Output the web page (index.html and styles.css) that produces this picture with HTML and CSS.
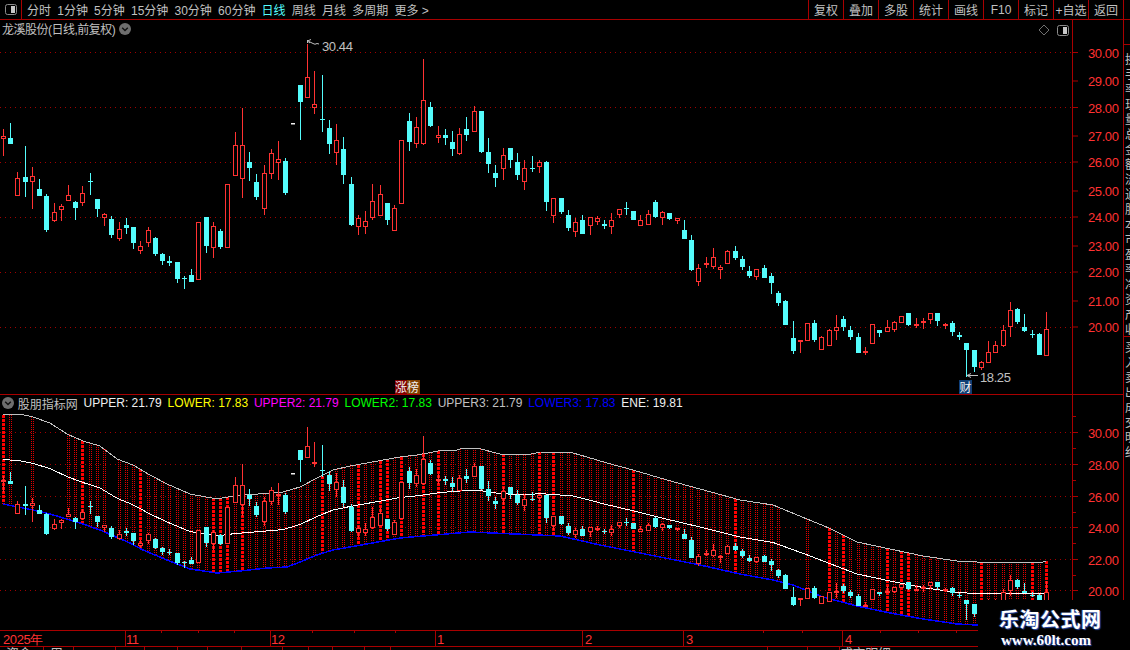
FILE: index.html
```html
<!DOCTYPE html>
<html>
<head>
  <meta charset="utf-8">
  <link rel="stylesheet" href="styles.css">
</head>
<body>
  <div class="toolbar">
    <div class="panel-btn">
      <svg width="12" height="11" viewBox="0 0 12 11"><rect x="0.5" y="0.5" width="11" height="10" rx="2" fill="none" stroke="#8c8c8c"/><rect x="6" y="2" width="4" height="7" fill="#c8c8c8"/></svg>
    </div>
    <div class="periods">
      <span>分时</span><span>1分钟</span><span>5分钟</span><span>15分钟</span><span>30分钟</span><span>60分钟</span>
      <span class="active">日线</span><span>周线</span><span>月线</span><span>多周期</span><span>更多 &gt;</span>
    </div>
    <div class="actions">
      <span>复权</span><span>叠加</span><span>多股</span><span>统计</span><span>画线</span><span>F10</span><span>标记</span><span>+自选</span><span>返回</span>
    </div>
  </div>

  <div class="workspace">
    <div class="charts">
      <div class="pane pane-price">
        <svg id="price-chart" class="chart" viewBox="0 20 1123 374"></svg>
        <div class="pane-title">
          <span>龙溪股份(日线,前复权)</span>
          <svg class="chevron" width="12" height="12" viewBox="0 0 12 12"><circle cx="6" cy="6" r="6" fill="#6e6e6e"/><path d="M3.2 4.8 6 7.6 8.8 4.8" fill="none" stroke="#111" stroke-width="1.4"/></svg>
        </div>
        <div class="pane-tools">
          <svg width="12" height="12" viewBox="0 0 12 12"><path d="M6 1 11 6 6 11 1 6Z" fill="none" stroke="#707070"/></svg>
          <svg width="12" height="11" viewBox="0 0 12 11"><rect x="0.5" y="0.5" width="11" height="10" rx="2" fill="none" stroke="#8c8c8c"/><rect x="6" y="2" width="4" height="7" fill="#c8c8c8"/></svg>
        </div>
      </div>

      <div class="pane pane-indicator">
        <svg id="band-chart" class="chart" viewBox="0 395 1123 235"></svg>
        <div class="legend">
          <svg class="chevron" width="12" height="12" viewBox="0 0 12 12"><circle cx="6" cy="6" r="6" fill="#6e6e6e"/><path d="M3.2 4.8 6 7.6 8.8 4.8" fill="none" stroke="#111" stroke-width="1.4"/></svg>
          <span class="legend-name">股朋指标网</span>
          <span class="c-white">UPPER: 21.79</span>
          <span class="c-yellow">LOWER: 17.83</span>
          <span class="c-magenta">UPPER2: 21.79</span>
          <span class="c-green">LOWER2: 17.83</span>
          <span class="c-gray">UPPER3: 21.79</span>
          <span class="c-blue">LOWER3: 17.83</span>
          <span class="c-white">ENE: 19.81</span>
        </div>
      </div>

      <svg id="date-axis" class="date-axis" viewBox="0 630 1123 20"></svg>
    </div>

    <div class="side">
      <div class="side-top"></div>
      <div class="side-block side-quotes">换手率现量总金额流通股本市盈率净资产收</div>
      <div class="side-block side-trades">买入卖出成交明细</div>
    </div>
  </div>

  <div class="watermark">
    <div class="wm-title">乐淘公式网</div>
    <div class="wm-url">www.60lt.com</div>
  </div>

  <script src="charts.js"></script>
</body>
</html>
```
FILE: styles.css
```css
* {
  box-sizing: border-box;
}

html, body {
  margin: 0;
  background-color: #000;
  overflow: hidden;
}

body {
  position: relative;
  width: 1130px;
  height: 650px;
  font-family: "Liberation Sans", "Noto Sans CJK SC", sans-serif;
  font-size: 12px;
  color: #c0c0c0;
}

/* toolbar */
.toolbar {
  display: flex;
  height: 20px;
  padding-right: 6px;
  border-bottom: 1px solid #a80000;
}

.panel-btn {
  display: flex;
  align-items: center;
  justify-content: center;
  width: 22px;
  border-right: 1px solid #a80000;
}

.periods {
  display: flex;
  align-items: center;
  gap: 6.2px;
  padding-left: 5px;
  flex: 1;
  white-space: nowrap;
}

.periods .active {
  color: #54fcfc;
}

.actions {
  display: flex;
  border-right: 1px solid #a80000;
}

.actions span {
  display: flex;
  align-items: center;
  justify-content: center;
  width: 35px;
  border-left: 1px solid #a80000;
  white-space: nowrap;
}

/* chart area */
.workspace {
  display: flex;
  height: 630px;
}

.charts {
  width: 1124px;
  border-right: 1px solid #a80000;
}

.pane {
  position: relative;
}

.pane-price {
  height: 375px;
  border-bottom: 1px solid #a80000;
}

.pane-indicator {
  height: 235px;
}

.chart {
  display: block;
  width: 1123px;
  height: 100%;
}

.chart text,
.date-axis text {
  font-family: "Liberation Sans", sans-serif;
  font-size: 13px;
  letter-spacing: -0.4px;
  fill: #ff3232;
}

.chart .mark {
  fill: #c0c0c0;
}

.chart .tag {
  font-family: "Noto Sans CJK SC", sans-serif;
  font-size: 12px;
  letter-spacing: 0;
  fill: #f0f0f0;
}

.crisp {
  shape-rendering: crispEdges;
}

.pane-title {
  position: absolute;
  top: 0;
  left: 2px;
  display: flex;
  align-items: center;
  gap: 4px;
  letter-spacing: -0.5px;
}

.chevron {
  flex: none;
}

.pane-tools {
  position: absolute;
  top: 4px;
  left: 1038px;
  display: flex;
  align-items: center;
  gap: 7px;
}

.legend {
  position: absolute;
  top: 0;
  left: 2px;
  display: flex;
  align-items: center;
  gap: 5.8px;
  height: 16px;
  font-size: 12px;
  white-space: nowrap;
}

.legend-name {
  margin-left: -2px;
}

.c-white { color: #f0f0f0; }
.c-yellow { color: #ffff00; }
.c-magenta { color: #ff00ff; }
.c-green { color: #00ff00; }
.c-gray { color: #c0c0c0; }
.c-blue { color: #0000ff; }

.date-axis {
  display: block;
  width: 1123px;
  height: 20px;
}

/* clipped right column */
.side {
  width: 6px;
  overflow: hidden;
  font-size: 12px;
  line-height: 15px;
}

.side-top {
  height: 25px;
  border-bottom: 1px solid #a80000;
}

.side-block {
  width: 14px;
  padding-left: 1px;
  overflow: hidden;
}

.side-quotes {
  height: 292px;
  padding-top: 8px;
  border-bottom: 1px solid #a80000;
}

.side-trades {
  height: 122px;
  padding-top: 4px;
}

.watermark {
  position: absolute;
  left: 978px;
  top: 600px;
  width: 152px;
  height: 50px;
  padding: 6px 0 0 21px;
  background-color: #000;
  color: #fff;
}

.wm-title {
  font-family: "Noto Sans CJK SC", sans-serif;
  font-size: 20px;
  font-weight: 700;
  line-height: 26px;
  letter-spacing: 0.5px;
  text-shadow: 1px 1px 1px #2a4aa8, -1px 0 1px #2a4aa8;
}

.wm-url {
  font-family: "Liberation Serif", serif;
  font-size: 15px;
  font-weight: 700;
  line-height: 16px;
  margin-left: 2px;
  text-shadow: 1px 1px 1px #2a4aa8;
}
```
FILE: charts.js
```js
// each candle: [red?, high, body top, body bottom, low], in pixels of the price pane
const candles = [
  [1,129,136,139,156],[0,123,138,144,144],[1,172,178,196,196],[0,146,177,182,197],[1,167,176,182,209],
  [0,179,189,196,196],[0,194,196,230,232],[1,203,212,221,222],[1,204,206,210,221],[1,185,195,201,201],
  [0,201,202,208,220],[1,186,193,203,206],[0,173,181,182,195],[0,199,199,209,217],[1,213,214,218,226],
  [0,216,219,235,238],[1,222,229,239,241],[0,218,225,228,234],[0,227,227,243,249],[1,241,246,251,254],
  [1,227,230,243,247],[0,237,238,254,256],[0,253,254,261,265],[0,256,261,263,266],[0,262,262,279,283],
  [0,276,278,279,289],[0,269,275,282,282],[1,222,222,280,280],[0,217,217,246,253],[1,222,226,248,258],
  [0,229,231,247,249],[1,184,184,248,248],[1,132,145,176,176],[1,108,145,179,198],[0,152,162,168,181],
  [0,174,182,197,200],[1,165,173,209,215],[1,149,153,174,179],[1,141,159,163,180],[0,158,161,193,195],
  null,
  [0,85,85,102,140],[1,44,77,98,98],[1,71,104,108,114],[0,75,119,120,132],[0,120,128,144,154],
  [1,124,140,153,165],[0,137,149,175,184],[0,177,184,225,226],[1,215,218,227,235],[1,211,221,227,234],
  [1,184,201,218,220],[1,185,194,216,216],[0,203,203,220,225],[1,205,208,231,231],[1,140,140,204,204],
  [0,113,121,142,151],[1,117,127,144,148],[1,59,100,144,145],[0,102,107,126,127],[1,126,135,138,143],
  [0,129,135,138,145],[0,131,142,149,156],[1,128,134,154,155],[0,117,129,135,141],[1,106,111,132,132],
  [0,111,111,152,153],[0,138,152,164,173],[0,165,173,178,187],[1,148,155,169,180],[0,148,148,160,168],
  [0,153,162,175,180],[1,160,168,182,190],[0,156,168,169,172],[1,160,162,167,173],[0,161,162,202,211],
  [1,198,198,216,223],[0,198,198,212,214],[0,210,215,228,231],[1,218,222,232,237],[0,215,220,234,234],
  [1,217,217,226,235],[1,216,218,222,225],[0,220,224,226,229],[1,213,220,227,234],[1,209,209,215,218],
  [0,202,208,209,215],[0,211,211,220,220],[1,215,220,226,226],[1,210,214,225,225],[0,200,202,217,218],
  [1,211,212,218,225],[0,213,213,219,220],[1,218,218,221,224],[0,220,230,239,239],[0,235,240,270,271],
  [1,264,268,282,286],[1,257,263,264,268],[1,248,257,267,269],[1,265,267,270,279],[1,250,251,264,264],
  [0,246,251,258,260],[0,256,259,267,270],[0,266,271,276,278],[1,269,269,277,280],[0,265,268,278,278],
  [0,273,276,283,294],[0,291,293,303,306],[0,300,301,325,325],[0,321,338,351,354],[1,340,340,342,353],
  [1,323,323,341,341],[0,320,323,340,342],[1,336,337,350,350],[1,329,330,346,346],[1,315,327,331,340],
  [0,316,319,327,331],[0,326,330,337,340],[0,333,337,353,353],[1,347,351,353,355],[1,324,324,344,344],
  [0,330,330,333,337],[1,320,327,332,332],[1,321,322,330,332],[1,316,316,323,323],[0,313,313,325,326],
  [1,318,324,326,328],[1,318,321,323,329],[1,313,313,320,324],[0,313,313,321,326],[1,323,324,325,329],
  [0,321,323,332,336],[0,332,335,337,340],[0,343,343,350,377],[0,350,350,367,372],[1,361,362,368,370],
  [1,341,352,363,363],[1,341,345,353,353],[1,325,330,346,347],[1,302,310,327,337],[0,308,309,322,324],
  [0,314,327,331,332],[0,330,334,335,338],[0,333,334,355,355],[1,312,329,356,356]
];

const upperBand = [[3,415],[20,414],[33,417],[50,423],[67,434],[83,441],[100,446],[117,459],[133,465],[150,475],[167,484],[190,494],[217,499],[233,496],[283,492],[300,487],[317,478],[333,470],[350,466],[367,463],[400,457],[417,455],[433,452],[443,450],[457,450],[463,448],[477,448],[500,454],[527,455],[540,452],[573,453],[587,457],[607,463],[633,470],[667,480],[700,489],[740,500],[773,505],[807,519],[829,528],[857,542],[890,549],[923,556],[957,561],[977,562],[1043,562],[1046,561]];
const lowerBand = [[3,504],[33,510],[50,514],[83,524],[100,530],[130,543],[143,550],[167,560],[190,569],[217,573],[240,571],[267,568],[287,567],[300,562],[317,555],[333,550],[350,547],[400,538],[470,532],[560,536],[600,545],[700,565],[740,574],[773,580],[793,585],[823,597],[857,606],[890,613],[923,619],[957,624],[977,625],[1043,624],[1046,625]];

// price pane y positions of the ticks, low pane is linear
const priceTicks = [[30,52.5],[29,81],[28,107.5],[27,136],[26,162],[25,191],[24,217],[23,246],[22,272],[21,301],[20,327]];
const brightColumns = [0,11,19,29,30,31,33,44,49,52,53,55,58,60,69,74,76,87,101,114,116,122,124,125,135,142,144];
const skipColumns = [2,3,5,6,7,8,15,108,109,110,112,113];

const CYAN = '#54fcfc';
const RED = '#ff3232';
const FRAME = '#a80000';

function candleX(i) {
  return Math.floor(3.3 + 7.245 * i);
}

function lowY(y) {
  // price pane pixel -> price -> indicator pane pixel
  let price = 30 + (52.5 - y) / 27.5;
  for (let i = 0; i < priceTicks.length - 1; i++) {
    const a = priceTicks[i], b = priceTicks[i + 1];
    if (y >= a[1] && y <= b[1]) price = a[0] - (y - a[1]) / (b[1] - a[1]);
  }
  if (y > 327) price = 20 - (y - 327) / 27;
  return Math.round(590.5 - (price - 20) * 15.85);
}

function bandAt(band, x) {
  for (let i = 0; i < band.length - 1; i++) {
    if (x >= band[i][0] && x <= band[i + 1][0]) {
      const t = (x - band[i][0]) / (band[i + 1][0] - band[i][0]);
      return band[i][1] + (band[i + 1][1] - band[i][1]) * t;
    }
  }
  return band[band.length - 1][1];
}

function vline(x, y1, y2, color, extra) {
  return `<line x1="${x}" y1="${y1}" x2="${x}" y2="${y2}" stroke="${color}" ${extra || ''}/>`;
}

function drawCandles(map) {
  let out = '';
  candles.forEach((c, i) => {
    if (!c) return;
    const cx = candleX(i);
    const color = c[0] ? RED : CYAN;
    const top = map(c[2]);
    const bottom = Math.max(map(c[3]), top + 1);
    out += vline(cx + 0.5, map(c[1]), top, color);
    out += vline(cx + 0.5, bottom, map(c[4]), color);
    if (c[0]) {
      out += `<rect x="${cx - 1.5}" y="${top + 0.5}" width="4" height="${Math.max(bottom - top - 1, 1)}" fill="#000" stroke="${color}"/>`;
    } else {
      out += `<rect x="${cx - 2}" y="${top}" width="5" height="${Math.max(bottom - top, 1)}" fill="${color}"/>`;
    }
  });
  return out;
}

function drawGrid(ys) {
  return ys.map(y =>
    `<line x1="0" y1="${y}" x2="1072" y2="${y}" stroke="#a00000" stroke-dasharray="1 4"/>`
  ).join('');
}

function drawAxis(major, minor, top, bottom) {
  let out = vline(1072.5, top, bottom, FRAME);
  major.forEach(t => {
    out += `<line x1="1073" y1="${t.y}" x2="1078" y2="${t.y}" stroke="${FRAME}"/>`;
    out += `<text x="1088" y="${t.y + 5}">${t.label}</text>`;
  });
  minor.forEach(y => {
    out += `<line x1="1073" y1="${y}" x2="1076" y2="${y}" stroke="${FRAME}"/>`;
  });
  return out;
}

function drawPricePane() {
  const svg = document.getElementById('price-chart');
  let out = drawGrid([52.5, 107.5, 162.5, 217.5, 272.5, 327.5]);
  out += drawCandles(y => y);
  out += `<rect x="${candleX(40) - 2}" y="123" width="4" height="1.5" fill="#f0f0f0"/>`;

  // high and low marks
  out += `<path d="M307.5 43V40M307.5 41 311 39.5M307.5 41 310 43M309 41.5 313 43.5Q315 45 317 43.5L319 44" fill="none" stroke="#c0c0c0"/>`;
  out += `<text class="mark" x="322" y="51">30.44</text>`;
  out += `<path d="M967 375.5H978M967 375.5 971 373.5M967 375.5 971 377.5" fill="none" stroke="#c0c0c0"/>`;
  out += `<text class="mark" x="980" y="382">18.25</text>`;

  // event tags sit on the bottom edge
  out += `<rect x="395" y="380" width="13" height="14" fill="#800000"/><rect x="407" y="380" width="13" height="14" fill="#804000"/>`;
  out += `<text class="tag" x="395" y="392">涨</text><text class="tag" x="407" y="392">榜</text>`;
  out += `<rect x="959" y="380" width="13" height="14" fill="#0f3f75"/><text class="tag" x="959.5" y="392">财</text>`;

  const major = [30, 28, 26, 24, 22, 20].map(v => ({ y: priceTicks[30 - v][1], label: v + '.00' }));
  major.push(...[29, 27, 25, 23, 21].map(v => ({ y: priceTicks[30 - v][1], label: v + '.00' })));
  out += drawAxis(major, [], 20, 394);
  svg.innerHTML = out;
}

function drawBandPane() {
  const svg = document.getElementById('band-chart');
  let out = drawGrid([432.5, 464.5, 496.5, 527.5, 559.5, 590.5]);

  candles.forEach((c, i) => {
    const cx = candleX(i);
    if (skipColumns.includes(i)) return;
    const top = Math.round(bandAt(upperBand, cx));
    const bottom = Math.round(bandAt(lowerBand, cx));
    if (brightColumns.includes(i)) {
      out += vline(cx + 0.5, top, bottom, '#ff0000', 'class="crisp" stroke-width="3" stroke-dasharray="3 1"');
    } else {
      // two thin rows of dots
      out += vline(cx - 0.5, top, bottom, '#e00000', 'class="crisp" stroke-dasharray="1 1"');
      out += vline(cx + 1.5, top, bottom, '#e00000', 'class="crisp" stroke-dasharray="1 1"');
    }
  });

  const toPoints = band => band.map(p => p.join(',')).join(' ');
  const middle = upperBand.map(p => [p[0], (p[1] + bandAt(lowerBand, p[0])) / 2]);
  out += `<polyline class="crisp" points="${toPoints(upperBand)}" fill="none" stroke="#c0c0c0"/>`;
  out += `<polyline class="crisp" points="${toPoints(lowerBand)}" fill="none" stroke="#0000ff" stroke-width="1.5"/>`;
  out += `<polyline class="crisp" points="${toPoints(middle)}" fill="none" stroke="#ffffff"/>`;

  out += drawCandles(lowY);
  out += `<rect x="${candleX(40) - 2}" y="473" width="4" height="1.5" fill="#f0f0f0"/>`;

  const major = [30, 28, 26, 24, 22, 20].map((v, i) => ({ y: [432.5, 464.5, 496.5, 527.5, 559.5, 590.5][i], label: v + '.00' }));
  const minor = [416.5, 448.5, 480.5, 512.5, 543.5, 575.5];
  out += drawAxis(major, minor, 395, 630);
  svg.innerHTML = out;
}

function drawDateAxis() {
  const svg = document.getElementById('date-axis');
  let out = `<line x1="0" y1="630.5" x2="1123" y2="630.5" stroke="${FRAME}"/>`;
  out += `<line x1="0" y1="646.5" x2="1123" y2="646.5" stroke="${FRAME}"/>`;

  [[3, '2025年', 0], [126, '11', 125], [271, '12', 270], [437, '1', 435], [585, '2', 582], [686, '3', 683], [845, '4', 842]].forEach(m => {
    if (m[2]) out += vline(m[2] + 0.5, 630, 646, FRAME);
    out += `<text x="${m[0]}" y="644">${m[1]}</text>`;
  });
  [161, 198, 234, 312, 354, 395, 763, 802, 880, 918, 956].forEach(x => {
    out += vline(x + 0.5, 631, 633, FRAME);
  });
  [43, 73, 115, 144, 177, 207, 241, 282, 308, 332, 364, 390, 767, 807, 839, 871].forEach(x => {
    out += vline(x + 0.5, 647, 650, FRAME);
  });

  // tab captions, mostly cut off by the window
  [[6, '资金'], [50, '周'], [840, '成交明细']].forEach(t => {
    out += `<text x="${t[0]}" y="658" style="fill:#c0c0c0;font-family:'Noto Sans CJK SC'">${t[1]}</text>`;
  });
  svg.innerHTML = out;
}

drawPricePane();
drawBandPane();
drawDateAxis();
```
